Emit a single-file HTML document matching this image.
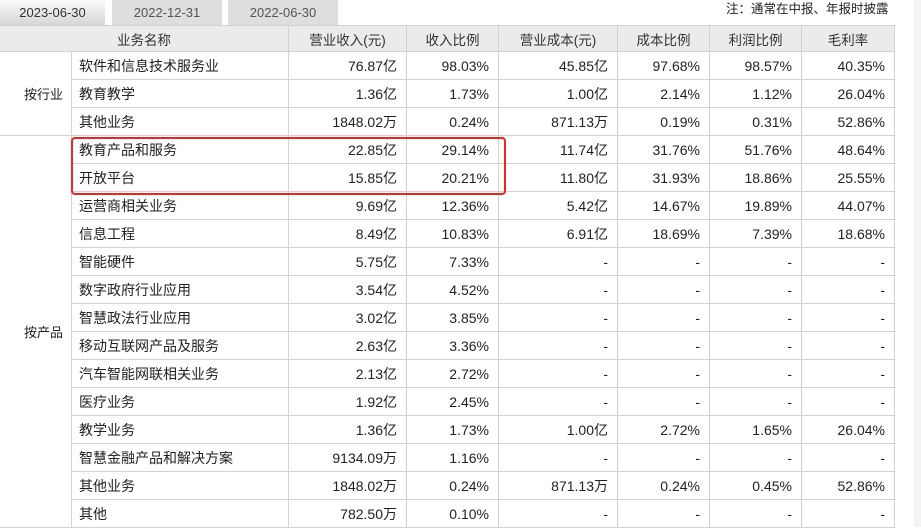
<!DOCTYPE html>
<html><head><meta charset="utf-8"><style>
body{margin:0;width:921px;height:527px;overflow:hidden;background:#fff;font-family:"Liberation Sans","Noto Sans CJK SC",sans-serif;font-size:14px;color:#222;position:relative}
.tab{position:absolute;top:0;height:25px;line-height:25px;text-align:center;font-size:13px;color:#555;background:#dedede}
.t1{left:0;width:105px;background:linear-gradient(#fafafa,#d6d6d6);color:#333}
.t2{left:112px;width:110px}
.t3{left:228px;width:110px}
.note{position:absolute;top:0;left:726px;line-height:18px;font-size:12.5px;color:#222}
table{position:absolute;top:25px;left:-1px;border-collapse:collapse;table-layout:fixed;width:895px}
td,th{border:1px solid #d2d2d2;height:27px;padding:0 7px;white-space:nowrap;font-weight:normal}
th{background:#ebebeb;color:#333;text-align:center;height:25px;font-size:13.5px}
td.r{text-align:right;padding-right:9px}
td.c{text-align:right;padding-right:8px;font-size:13px}
.box{position:absolute;left:71px;top:137px;width:431px;height:54px;border:2px solid #f0231f;border-radius:4px}
.sb{position:absolute;left:914px;top:0;width:7px;height:527px;background:#f3f3f3}
</style></head><body>
<div class="tab t1">2023-06-30</div><div class="tab t2">2022-12-31</div><div class="tab t3">2022-06-30</div>
<div class="note">注：通常在中报、年报时披露</div>
<div class="sb"></div>
<table>
<colgroup><col style="width:72px"><col style="width:217px"><col style="width:118px"><col style="width:92px"><col style="width:119px"><col style="width:92px"><col style="width:92px"><col style="width:93px"></colgroup>
<tr><th colspan="2">业务名称</th><th>营业收入(元)</th><th>收入比例</th><th>营业成本(元)</th><th>成本比例</th><th>利润比例</th><th>毛利率</th></tr>
<tr><td class="c" rowspan="3">按行业</td><td>软件和信息技术服务业</td><td class="r">76.87亿</td><td class="r">98.03%</td><td class="r">45.85亿</td><td class="r">97.68%</td><td class="r">98.57%</td><td class="r">40.35%</td></tr>
<tr><td>教育教学</td><td class="r">1.36亿</td><td class="r">1.73%</td><td class="r">1.00亿</td><td class="r">2.14%</td><td class="r">1.12%</td><td class="r">26.04%</td></tr>
<tr><td>其他业务</td><td class="r">1848.02万</td><td class="r">0.24%</td><td class="r">871.13万</td><td class="r">0.19%</td><td class="r">0.31%</td><td class="r">52.86%</td></tr>
<tr><td class="c" rowspan="14">按产品</td><td>教育产品和服务</td><td class="r">22.85亿</td><td class="r">29.14%</td><td class="r">11.74亿</td><td class="r">31.76%</td><td class="r">51.76%</td><td class="r">48.64%</td></tr>
<tr><td>开放平台</td><td class="r">15.85亿</td><td class="r">20.21%</td><td class="r">11.80亿</td><td class="r">31.93%</td><td class="r">18.86%</td><td class="r">25.55%</td></tr>
<tr><td>运营商相关业务</td><td class="r">9.69亿</td><td class="r">12.36%</td><td class="r">5.42亿</td><td class="r">14.67%</td><td class="r">19.89%</td><td class="r">44.07%</td></tr>
<tr><td>信息工程</td><td class="r">8.49亿</td><td class="r">10.83%</td><td class="r">6.91亿</td><td class="r">18.69%</td><td class="r">7.39%</td><td class="r">18.68%</td></tr>
<tr><td>智能硬件</td><td class="r">5.75亿</td><td class="r">7.33%</td><td class="r">-</td><td class="r">-</td><td class="r">-</td><td class="r">-</td></tr>
<tr><td>数字政府行业应用</td><td class="r">3.54亿</td><td class="r">4.52%</td><td class="r">-</td><td class="r">-</td><td class="r">-</td><td class="r">-</td></tr>
<tr><td>智慧政法行业应用</td><td class="r">3.02亿</td><td class="r">3.85%</td><td class="r">-</td><td class="r">-</td><td class="r">-</td><td class="r">-</td></tr>
<tr><td>移动互联网产品及服务</td><td class="r">2.63亿</td><td class="r">3.36%</td><td class="r">-</td><td class="r">-</td><td class="r">-</td><td class="r">-</td></tr>
<tr><td>汽车智能网联相关业务</td><td class="r">2.13亿</td><td class="r">2.72%</td><td class="r">-</td><td class="r">-</td><td class="r">-</td><td class="r">-</td></tr>
<tr><td>医疗业务</td><td class="r">1.92亿</td><td class="r">2.45%</td><td class="r">-</td><td class="r">-</td><td class="r">-</td><td class="r">-</td></tr>
<tr><td>教学业务</td><td class="r">1.36亿</td><td class="r">1.73%</td><td class="r">1.00亿</td><td class="r">2.72%</td><td class="r">1.65%</td><td class="r">26.04%</td></tr>
<tr><td>智慧金融产品和解决方案</td><td class="r">9134.09万</td><td class="r">1.16%</td><td class="r">-</td><td class="r">-</td><td class="r">-</td><td class="r">-</td></tr>
<tr><td>其他业务</td><td class="r">1848.02万</td><td class="r">0.24%</td><td class="r">871.13万</td><td class="r">0.24%</td><td class="r">0.45%</td><td class="r">52.86%</td></tr>
<tr><td>其他</td><td class="r">782.50万</td><td class="r">0.10%</td><td class="r">-</td><td class="r">-</td><td class="r">-</td><td class="r">-</td></tr>
</table>
<div class="box"></div>
</body></html>
